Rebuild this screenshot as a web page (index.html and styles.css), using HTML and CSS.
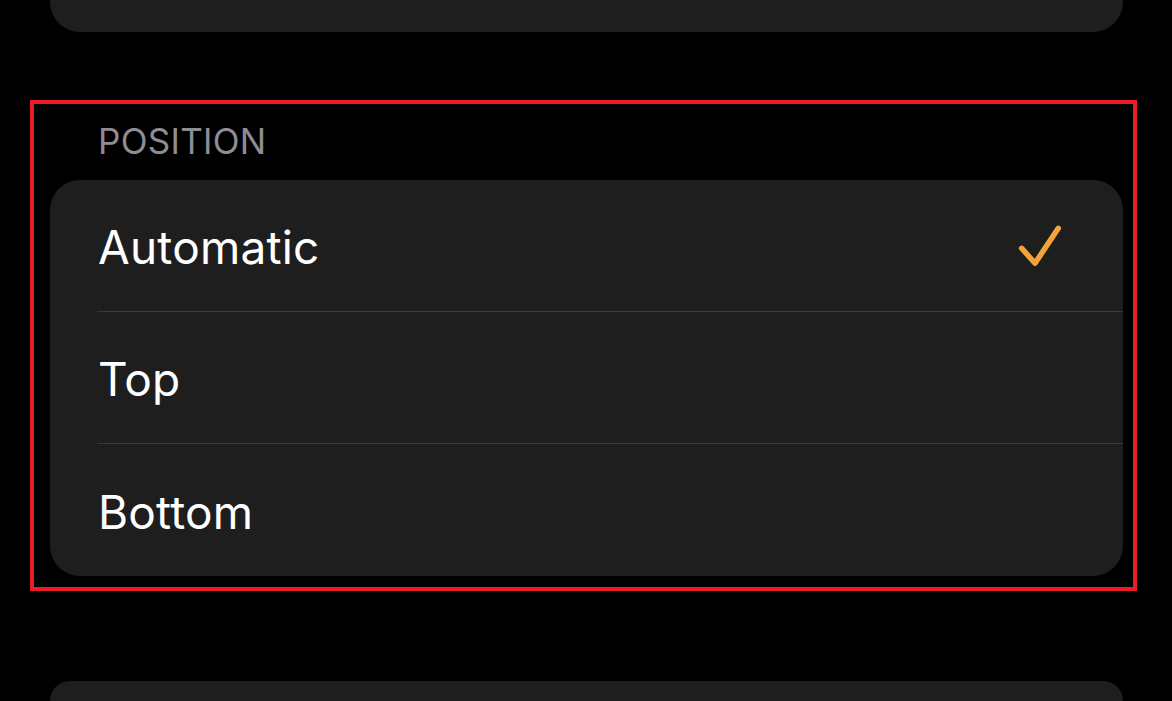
FILE: index.html
```html
<!DOCTYPE html>
<html lang="en">
<head>
<meta charset="utf-8">
<title>Position</title>
<link rel="stylesheet" href="styles.css">
</head>
<body>
<div class="page">
  <div class="card card-top"></div>

  <section class="highlight">
    <div class="section-header">POSITION</div>
    <div class="card group">
      <div class="row">
        <span class="label">Automatic</span>
        <svg class="check" width="48" height="48" viewBox="0 0 48 48" aria-hidden="true">
          <polyline points="5.7,26.3 19,41.3 42.3,6.3" fill="none" stroke="#F2A33A" stroke-width="5.5" stroke-linecap="round" stroke-linejoin="round"/>
        </svg>
      </div>
      <div class="row">
        <span class="label">Top</span>
      </div>
      <div class="row last">
        <span class="label">Bottom</span>
      </div>
    </div>
  </section>

  <div class="card card-bottom"></div>
</div>
</body>
</html>
```

FILE: styles.css
```css
html, body {
  margin: 0;
  padding: 0;
  background: #000;
  height: 100%;
  overflow: hidden;
}

.page {
  font-family: Inter, "Noto Sans", "Liberation Sans", sans-serif;
  color: #fff;
  display: flex;
  flex-direction: column;
}

.card {
  background: #1e1e1f;
  margin-left: 50px;
  width: 1073px;
}

.card-top {
  height: 32px;
  border-radius: 0 0 30px 30px;
}

.highlight {
  margin-top: 68px;
  margin-left: 30px;
  width: 1107px;
  box-sizing: border-box;
  border: 4px solid #ec1c24;
  padding: 0 10px 11px 16px;
}

.highlight .card {
  margin-left: 0;
}

.section-header {
  height: 76px;
  box-sizing: border-box;
  padding-left: 48px;
  padding-top: 17px;
  font-size: 35px;
  line-height: 40px;
  color: #8d8d93;
  letter-spacing: 0.3px;
}

.group {
  border-radius: 30px;
  display: flex;
  flex-direction: column;
}

.row {
  height: 131px;
  margin-left: 47px;
  padding-left: 1px;
  padding-right: 59px;
  border-bottom: 1px solid #3a3a3c;
  display: flex;
  align-items: center;
  justify-content: space-between;
}

.row.last {
  height: 132px;
  border-bottom: none;
}

.label {
  font-size: 46px;
  line-height: 56px;
  padding-top: 3px;
  letter-spacing: 0.2px;
}

.check {
  display: block;
}

.card-bottom {
  margin-top: 90px;
  height: 20px;
  border-radius: 30px 30px 0 0;
}
```
